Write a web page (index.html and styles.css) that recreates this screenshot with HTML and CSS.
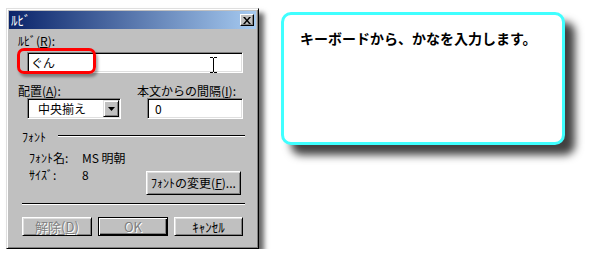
FILE: index.html
```html
<!DOCTYPE html>
<html lang="ja">
<head>
    <meta charset="UTF-8">
    <meta name="viewport" content="width=device-width, initial-scale=1.0">
    <title>ルビ</title>
    <link rel="stylesheet" href="styles.css">
</head>
<body>
    <div class="page">
        <div class="dialog">
            <div class="titlebar">
                <span class="title">ﾙﾋﾞ</span>
                <span class="close">
                    <svg width="8" height="7" viewBox="0 0 8 7"><path d="M0 0H2L4 2.5L6 0H8L5 3.5L8 7H6L4 4.5L2 7H0L3 3.5Z" fill="#000"/></svg>
                </span>
            </div>
            <div class="label ruby-label">ﾙﾋﾞ(<u>R</u>):</div>
            <div class="field ruby-field">ぐん</div>
            <div class="pair">
                <div class="col col-left">
                    <div class="label">配置(<u>A</u>):</div>
                    <div class="field select">
                        <span class="select-text">中央揃え</span>
                        <span class="drop">
                            <svg width="7" height="4" viewBox="0 0 7 4"><polygon points="0,0 7,0 3.5,4" fill="#000"/></svg>
                        </span>
                    </div>
                </div>
                <div class="col col-right">
                    <div class="label">本文からの間隔(<u>I</u>):</div>
                    <div class="field spacing">0</div>
                </div>
            </div>
            <div class="group-head">
                <span>ﾌｫﾝﾄ</span>
                <span class="rule"></span>
            </div>
            <div class="font-row">
                <div class="info">
                    <span>ﾌｫﾝﾄ名:</span><span>MS 明朝</span>
                    <span>ｻｲｽﾞ:</span><span>8</span>
                </div>
                <div class="btn font-btn">ﾌｫﾝﾄの変更(<u>F</u>)...</div>
            </div>
            <div class="sep"></div>
            <div class="actions">
                <div class="btn disabled">解除(<u>D</u>)</div>
                <div class="btn default disabled">OK</div>
                <div class="btn">ｷｬﾝｾﾙ</div>
            </div>

            <div class="highlight"></div>
            <svg class="ibeam" width="7" height="16" viewBox="0 0 7 16">
                <path d="M0 0.5H3M4 0.5H7M3.5 1V15M0 15.5H3M4 15.5H7" stroke="#000" stroke-width="1" fill="none"/>
            </svg>
        </div>

        <div class="callout">キーボードから、かなを入力します。</div>
    </div>
</body>
</html>
```

FILE: styles.css
```css
body {
    margin: 0;
    background: #fff;
    font-family: "Noto Sans CJK JP", "Noto Sans", sans-serif;
    font-size: 12px;
    color: #000;
}
.page {
    display: flex;
    align-items: flex-start;
    padding: 8px 0 0 6px;
}
.dialog {
    position: relative;
    width: 253px;
    height: 241px;
    box-sizing: border-box;
    background: #c0c0c0;
    border: 1px solid;
    border-color: #dfdfdf #000 #000 #dfdfdf;
    box-shadow: inset 1px 1px #fff, inset -1px -1px #808080, 5px 5px 5px rgba(0, 0, 0, 0.6);
    padding: 2px;
}
.titlebar {
    height: 18px;
    display: flex;
    align-items: center;
    justify-content: space-between;
    padding: 0 2px;
    background: linear-gradient(to right, #0a246a, #a6caf0);
}
.title {
    color: #fff;
    font-size: 13px;
    line-height: 18px;
}
.close {
    width: 14px;
    height: 12px;
    box-sizing: border-box;
    display: flex;
    align-items: center;
    justify-content: center;
    background: #c0c0c0;
    border: 1px solid;
    border-color: #fff #000 #000 #fff;
    box-shadow: inset -1px -1px #808080;
}
.label {
    line-height: 12px;
}
u {
    text-decoration-thickness: 1px;
    text-underline-offset: 1px;
}
.ruby-label {
    margin: 6px 0 0 9px;
}
.field {
    height: 21px;
    box-sizing: border-box;
    background: #fff;
    border: 1px solid;
    border-color: #808080 #fff #fff #808080;
    box-shadow: inset 1px 1px #000, inset -1px -1px #dfdfdf;
    line-height: 19px;
    padding-left: 3px;
}
.ruby-field {
    margin: 5px 0 0 18px;
    width: 216px;
}
.pair {
    display: flex;
    margin-top: 12px;
}
.col-left {
    width: 128px;
    box-sizing: border-box;
    padding-left: 9px;
}
.select {
    margin: 1px 0 0 9px;
    width: 94px;
    display: flex;
    justify-content: space-between;
    padding-left: 10px;
}
.drop {
    width: 16px;
    height: 17px;
    margin: 1px 1px 0 0;
    box-sizing: border-box;
    display: flex;
    align-items: center;
    justify-content: center;
    background: #c0c0c0;
    border: 1px solid;
    border-color: #dfdfdf #000 #000 #dfdfdf;
    box-shadow: inset 1px 1px #fff, inset -1px -1px #808080;
}
.spacing {
    margin: 1px 0 0 10px;
    width: 96px;
    padding-left: 7px;
}
.group-head {
    display: flex;
    margin-top: 12px;
    padding-left: 13px;
    line-height: 12px;
}
.rule {
    flex: 1;
    align-self: flex-start;
    margin: 4px 11px 0 12px;
    border-top: 1px solid #000;
    border-bottom: 1px solid #fff;
}
.font-row {
    display: flex;
    margin-top: 6px;
}
.info {
    flex: 1;
    padding-left: 20px;
    display: grid;
    grid-template-columns: 53px auto;
    grid-auto-rows: 17px;
    line-height: 17px;
    align-content: start;
}
.btn {
    width: 70px;
    height: 19px;
    box-sizing: border-box;
    display: flex;
    align-items: center;
    justify-content: center;
    background: #c0c0c0;
    border: 1px solid;
    border-color: #fff #000 #000 #fff;
    box-shadow: inset 1px 1px #dfdfdf, inset -1px -1px #808080;
    line-height: 12px;
}
.font-btn {
    width: 95px;
    height: 24px;
    margin: 22px 15px 0 0;
}
.sep {
    margin: 8px 11px 0 13px;
    border-top: 1px solid #000;
    border-bottom: 1px solid #fff;
}
.actions {
    display: flex;
    gap: 6px;
    margin-top: 12px;
    padding-left: 13px;
}
.actions .btn {
    font-size: 13px;
}
.actions .btn:last-child {
    width: 69px;
}
.btn.default {
    border-color: #000;
    box-shadow: inset 1px 1px #fff, inset -1px -1px #000, inset -2px -2px #808080;
}
.btn.disabled {
    color: #808080;
    text-shadow: 1px 1px #fff;
}
.highlight {
    position: absolute;
    left: 10px;
    top: 39px;
    width: 79px;
    height: 26px;
    box-sizing: border-box;
    border: 3px solid #f00;
    border-radius: 7px;
    box-shadow: 2px 3px 3px rgba(0, 0, 0, 0.35);
}
.ibeam {
    position: absolute;
    left: 203px;
    top: 48px;
}
.callout {
    margin: 4px 0 0 22px;
    width: 284px;
    height: 133px;
    box-sizing: border-box;
    background: #fff;
    border: 3px solid #40ffff;
    border-radius: 10px;
    box-shadow: 10px 10px 8px rgba(0, 0, 0, 0.75);
    padding: 14px 16px;
    font-size: 14px;
    font-weight: bold;
    line-height: 18px;
}
```
